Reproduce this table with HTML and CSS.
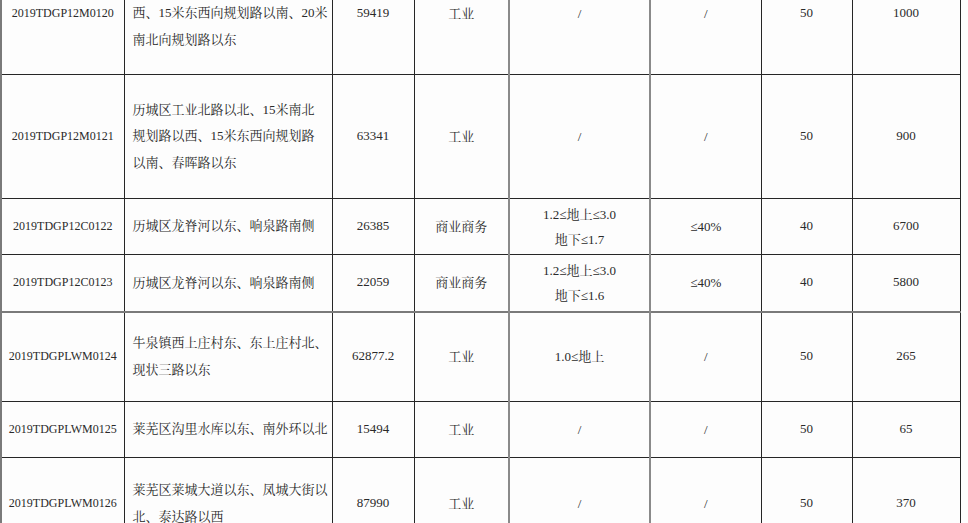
FILE: index.html
```html
<!DOCTYPE html>
<html lang="zh-CN">
<head>
<meta charset="utf-8">
<title>出让地块表</title>
<link rel="stylesheet" href="styles.css">
</head>
<body>
<table class="land">
  <colgroup>
    <col class="c-id"><col class="c-addr"><col class="c-area"><col class="c-use">
    <col class="c-far"><col class="c-green"><col class="c-years"><col class="c-price">
  </colgroup>
  <tbody>
    <tr class="r-tall0">
      <td class="id">2019TDGP12M0120</td>
      <td class="addr">&nbsp;<br>西、15米东西向规划路以南、20米<br>南北向规划路以东</td>
      <td class="num">59419</td>
      <td class="use">工业</td>
      <td class="far">/</td>
      <td class="green">/</td>
      <td class="num">50</td>
      <td class="num">1000</td>
    </tr>
    <tr class="r-tall1">
      <td class="id">2019TDGP12M0121</td>
      <td class="addr">历城区工业北路以北、15米南北<br>规划路以西、15米东西向规划路<br>以南、春晖路以东</td>
      <td class="num">63341</td>
      <td class="use">工业</td>
      <td class="far">/</td>
      <td class="green">/</td>
      <td class="num">50</td>
      <td class="num">900</td>
    </tr>
    <tr class="r-short">
      <td class="id">2019TDGP12C0122</td>
      <td class="addr">历城区龙脊河以东、响泉路南侧</td>
      <td class="num">26385</td>
      <td class="use">商业商务</td>
      <td class="far">1.2≤地上≤3.0<br>地下≤1.7</td>
      <td class="green">≤40%</td>
      <td class="num">40</td>
      <td class="num">6700</td>
    </tr>
    <tr class="r-short r-short2">
      <td class="id">2019TDGP12C0123</td>
      <td class="addr">历城区龙脊河以东、响泉路南侧</td>
      <td class="num">22059</td>
      <td class="use">商业商务</td>
      <td class="far">1.2≤地上≤3.0<br>地下≤1.6</td>
      <td class="green">≤40%</td>
      <td class="num">40</td>
      <td class="num">5800</td>
    </tr>
    <tr class="r-mid sep">
      <td class="id">2019TDGPLWM0124</td>
      <td class="addr">牛泉镇西上庄村东、东上庄村北、<br>现状三路以东</td>
      <td class="num">62877.2</td>
      <td class="use">工业</td>
      <td class="far">1.0≤地上</td>
      <td class="green">/</td>
      <td class="num">50</td>
      <td class="num">265</td>
    </tr>
    <tr class="r-short">
      <td class="id">2019TDGPLWM0125</td>
      <td class="addr">莱芜区沟里水库以东、南外环以北</td>
      <td class="num">15494</td>
      <td class="use">工业</td>
      <td class="far">/</td>
      <td class="green">/</td>
      <td class="num">50</td>
      <td class="num">65</td>
    </tr>
    <tr class="r-last">
      <td class="id">2019TDGPLWM0126</td>
      <td class="addr">莱芜区莱城大道以东、凤城大街以<br>北、泰达路以西</td>
      <td class="num">87990</td>
      <td class="use">工业</td>
      <td class="far">/</td>
      <td class="green">/</td>
      <td class="num">50</td>
      <td class="num">370</td>
    </tr>
  </tbody>
</table>
</body>
</html>
```

FILE: styles.css
```css
html, body {
  margin: 0;
  padding: 0;
  background: #fdfdfd;
}

body {
  font-family: "Liberation Serif", "Noto Serif CJK SC", "Noto Sans CJK SC", serif;
  color: #2a2a2a;
  font-size: 13px;
}

.land {
  border-collapse: collapse;
  table-layout: fixed;
  width: 960px;
  margin-top: -48px;
}

.c-id { width: 123px; }
.c-addr { width: 208px; }
.c-area { width: 82px; }
.c-use { width: 95px; }
.c-far { width: 141px; }
.c-green { width: 111px; }
.c-years { width: 91px; }
.c-price { width: 108px; }

.land td {
  border: 1px solid #262626;
  padding: 0;
  text-align: center;
  vertical-align: middle;
  line-height: 26px;
  white-space: nowrap;
}

.land td.id {
  font-size: 12px;
  border-left: 2px solid #7a7a7a;
  padding-bottom: 2px;
}

.land td.addr {
  text-align: left;
  padding-left: 8px;
  font-size: 13px;
  line-height: 26.5px;
}

.land td.far {
  border-left: 2px solid #8a8a8a;
  border-right: 2px solid #8a8a8a;
  line-height: 25px;
}

.land td.num {
  font-size: 13px;
  padding-bottom: 2px;
}

.land td.use {
  font-size: 13px;
}

.land td.green {
  font-size: 13px;
}

.land tr.sep td {
  border-top: 2px solid #7a7a7a;
}

.r-tall0 { height: 122px; }
.r-tall1 { height: 124px; }
.r-short { height: 56px; }
.r-short2 { height: 57px; }
.r-mid { height: 90px; }
.r-last { height: 92px; }
```
